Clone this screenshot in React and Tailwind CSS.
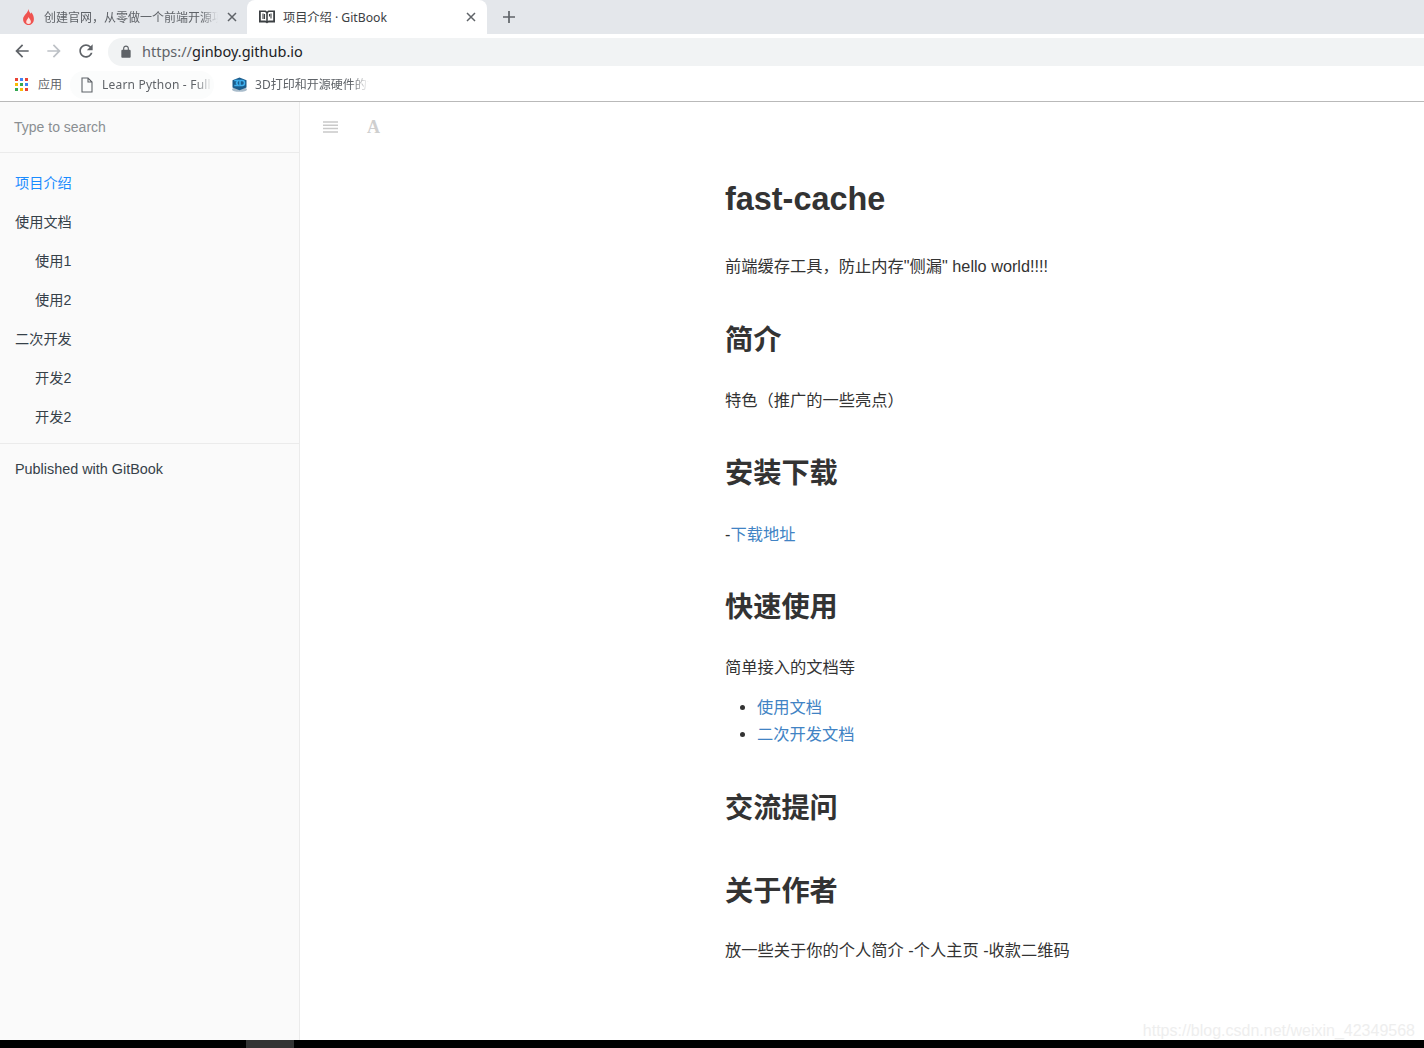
const ui = { fontFamily: '"Noto Sans", "Noto Sans CJK SC", sans-serif' };

const navItems = [
  { label: "项目介绍", active: true },
  { label: "使用文档" },
  { label: "使用1", sub: true },
  { label: "使用2", sub: true },
  { label: "二次开发" },
  { label: "开发2", sub: true },
  { label: "开发2", sub: true },
];

const CloseIcon = () => (
  <svg width="10" height="10" viewBox="0 0 10 10" className="shrink-0">
    <path d="M1 1l8 8M9 1l-8 8" stroke="#5f6368" strokeWidth="1.5" fill="none" />
  </svg>
);

const Fire = () => (
  <svg width="11" height="16" viewBox="0 0 11 16" className="shrink-0">
    <path d="M5.500 0c.2 2.400 1.300 3.400 2.300 4.700.3-.4.500-.9.500-1.500 1.500 1.800 2.600 4 2.600 6.700C10.900 13.400 8.600 16 5.500 16S.1 13.400.1 10.200C.1 6.400 4.700 4.500 5.500 0z" fill="#ef5350" />
    <path d="M5.600 8c.2 1.500 2.300 2.600 2.300 4.700 0 1.300-1 2.300-2.300 2.300-1.400 0-2.400-1-2.400-2.300C3.200 10.800 5.300 9.600 5.600 8z" fill="#fde3df" />
  </svg>
);

const BookIcon = () => (
  <svg width="16" height="14" viewBox="0 0 16 14" className="shrink-0">
    <path d="M0 .5h5.500C6.800.5 7.600 1 8 1.800 8.400 1 9.200.5 10.500.5H16V12.500h-5.500c-1.200 0-2 .3-2.500 1-.5-.7-1.300-1-2.500-1H0z" fill="#3c4043" />
    <path d="M1.800 2h3.600c.9 0 1.800.6 1.800 1.500V11c-.5-.3-1.100-.4-1.800-.4H1.800zM14.200 2h-3.600c-.9 0-1.800.6-1.800 1.500V11c.5-.3 1.100-.4 1.800-.4h3.600z" fill="#fff" />
    <path d="M4 3.500v5.500M5.500 4v5M10.500 4v2.500M12 3.500v5" stroke="#3c4043" strokeWidth="1.100" fill="none" />
  </svg>
);

// blue 3D badge with a soft shadow under it
const Bookmark3D = () => (
  <svg width="17" height="15" viewBox="0 0 17 15" className="shrink-0" aria-hidden="true">
    <ellipse cx="8.500" cy="12.500" rx="7.500" ry="2.300" fill="#a9bccb" />
    <path d="M8.500 0.500l7 2.800v7.200l-7 2.800-7-2.800V3.300z" fill="#1b5c8c" />
    <path d="M3.300 3.500h3.800L5.400 6l1.700 2.600H3.300M9 3.500h2.300c1.500 0 2.200 1.200 2.200 2.600s-.7 2.500-2.200 2.500H9z" fill="none" stroke="#3fb0ee" strokeWidth="1.500" />
  </svg>
);

const AppsGrid = () => {
  const colors = ["#ea4335", "#4285f4", "#ea4335", "#fbbc04", "#34a853", "#4285f4", "#34a853", "#fbbc04", "#ea4335"];
  return (
    <div className="grid grid-cols-3 gap-[2px] w-[13px] h-[13px] shrink-0">
      {colors.map((c, i) => (
        <span key={i} className="w-[3px] h-[3px]" style={{ backgroundColor: c }} />
      ))}
    </div>
  );
};

const TabStrip = () => (
  <div className="flex h-[34px] bg-[#e4e7eb] text-[12px] leading-none" style={ui}>
    <div className="flex items-center w-[247px] shrink-0 pl-[23px]">
      <Fire />
      <span className="ml-[10px] pt-[2px] w-[174px] overflow-hidden whitespace-nowrap text-[#5f6368] shrink-0 [mask-image:linear-gradient(to_right,black_90%,transparent)]">
        创建官网，从零做一个前端开源项目
      </span>
      <span className="ml-[9px]"><CloseIcon /></span>
    </div>
    <div className="flex items-center w-[240px] shrink-0 bg-white rounded-t-lg pl-[12px] pr-[11px]">
      <BookIcon />
      <span className="ml-[8px] pt-[2px] flex-1 text-[12.2px] text-[#3c4043] whitespace-nowrap">项目介绍 · GitBook</span>
      <CloseIcon />
    </div>
    <svg width="12" height="12" viewBox="0 0 12 12" className="ml-[16px] self-center">
      <path d="M6 0v12M0 6h12" stroke="#5f6368" strokeWidth="1.700" fill="none" />
    </svg>
  </div>
);

const AddressBar = () => (
  <div className="flex items-center h-[34px] bg-white">
    <svg width="20" height="20" viewBox="0 0 24 24" className="ml-[12px] shrink-0" fill="#5f6368">
      <path d="M20 11H7.830l5.590-5.590L12 4l-8 8 8 8 1.410-1.410L7.830 13H20v-2z" />
    </svg>
    <svg width="20" height="20" viewBox="0 0 24 24" className="ml-[12px] shrink-0" fill="#bdc1c6">
      <path d="M12 4l-1.410 1.410L16.170 11H4v2h12.170l-5.580 5.590L12 20l8-8z" />
    </svg>
    <svg width="20" height="20" viewBox="0 0 24 24" className="ml-[12px] shrink-0" fill="#5f6368">
      <path d="M17.650 6.350C16.200 4.900 14.210 4 12 4c-4.420 0-7.990 3.580-7.990 8s3.570 8 7.990 8c3.730 0 6.840-2.550 7.730-6h-2.080c-.82 2.330-3.040 4-5.650 4-3.310 0-6-2.690-6-6s2.690-6 6-6c1.660 0 3.140.69 4.220 1.780L13 11h7V4l-2.350 2.350z" />
    </svg>
    <div className="flex items-center flex-1 h-[28px] mt-[2px] ml-[12px] pl-[11px] bg-[#f1f3f4] rounded-l-full">
      <svg width="14" height="14" viewBox="0 0 24 24" fill="#5f6368" className="shrink-0">
        <path d="M18 8h-1V6c0-2.760-2.240-5-5-5S7 3.240 7 6v2H6c-1.100 0-2 .9-2 2v10c0 1.100.9 2 2 2h12c1.100 0 2-.9 2-2V10c0-1.100-.9-2-2-2zM9 6c0-1.660 1.340-3 3-3s3 1.340 3 3v2H9V6z" />
      </svg>
      <span className="ml-[9px] text-[14.5px] text-[#5f6368]" style={ui}>
        https://<span className="text-[#202124]">ginboy.github.io</span>
      </span>
    </div>
  </div>
);

const Bookmarks = () => (
  <div className="flex items-center h-[33px] bg-white border-b border-[#b9b9b9] box-content text-[12px] text-[#5f6368] whitespace-nowrap" style={ui}>
    <span className="ml-[15px]"><AppsGrid /></span>
    <span className="ml-[10px]">应用</span>
    <div className="flex items-center ml-[8px] w-[144px] h-[28px] pl-[10px] rounded-full bg-[#fbfcfc] overflow-hidden">
      <svg width="14" height="16" viewBox="0 0 14 16" className="shrink-0">
        <path d="M2 1h6l4 4V15H2zM8 1v4h4" fill="none" stroke="#5f6368" strokeWidth="1.100" />
      </svg>
      <span className="ml-[8px] w-[110px] overflow-hidden tracking-[0.2px] [mask-image:linear-gradient(to_right,black_85%,transparent)]">
        Learn Python - Full Course
      </span>
    </div>
    <span className="ml-[17px]"><Bookmark3D /></span>
    <span className="ml-[7px] w-[114px] overflow-hidden [mask-image:linear-gradient(to_right,black_85%,transparent)]">
      3D打印和开源硬件的世界
    </span>
  </div>
);

const Sidebar = () => (
  <aside className="w-[300px] shrink-0 bg-[#fafafa] border-r border-[#ebebeb] text-[14.2px] text-[#364149]">
    <div className="h-[51px] flex items-center pl-[14px] border-b border-[#ebebeb] text-[14px] text-[#8a8f92]">Type to search</div>
    <ul className="pt-[11px] pb-[6px] border-b border-[#ebebeb]">
      {navItems.map((item, i) => (
        <li
          key={i}
          className={`h-[39px] flex items-center ${item.sub ? "pl-[35px]" : "pl-[15px]"} ${item.active ? "text-[#1a8cff]" : ""}`}
        >
          {item.label}
        </li>
      ))}
    </ul>
    <div className="h-[50px] pt-[2px] flex items-center pl-[15px] text-[14.4px]">Published with GitBook</div>
  </aside>
);

const Toolbar = () => (
  <div className="flex items-center h-[50px] pl-[23px] gap-[29px]">
    <svg width="15" height="12" viewBox="0 0 15 12">
      <path d="M0 1h15M0 4.300h15M0 7.600h15M0 10.900h15" stroke="#c9c9c9" strokeWidth="1.500" fill="none" />
    </svg>
    <span className="font-bold text-[18px] text-[#cfcfcf] leading-none" style={{ fontFamily: '"Liberation Serif", serif' }}>A</span>
  </div>
);

const Content = () => (
  <article className="w-[700px] ml-[425px] pt-[23px] text-[16.25px] leading-[27.2px] text-[#333]">
    <h1 className="text-[32.4px] font-bold leading-[48px] mb-[30px]">fast-cache</h1>
    <p>前端缓存工具，防止内存"侧漏" hello world!!!!</p>
    <h2 className="text-[28.2px] font-bold leading-[47.6px] mt-[36.7px] mb-[22.8px]">简介</h2>
    <p>特色（推广的一些亮点）</p>
    <h2 className="text-[28.2px] font-bold leading-[47.6px] mt-[35.7px] mb-[22.8px]">安装下载</h2>
    <p>-<a className="text-[#4183c4]">下载地址</a></p>
    <h2 className="text-[28.2px] font-bold leading-[47.6px] mt-[36.7px] mb-[21.8px]">快速使用</h2>
    <p className="mb-[12.6px]">简单接入的文档等</p>
    <ul className="list-disc pl-[32px]">
      <li><a className="text-[#4183c4]">使用文档</a></li>
      <li><a className="text-[#4183c4]">二次开发文档</a></li>
    </ul>
    <h2 className="text-[28.2px] font-bold leading-[47.6px] mt-[36.7px] mb-[23.8px]">交流提问</h2>
    <h2 className="text-[28.2px] font-bold leading-[47.6px] mt-[35.7px] mb-[21.8px]">关于作者</h2>
    <p>放一些关于你的个人简介 -个人主页 -收款二维码</p>
  </article>
);

export default function App() {
  return (
    <div className="relative h-[1048px] w-[1424px] overflow-hidden flex flex-col bg-white" style={{ fontFamily: '"Liberation Sans", "Noto Sans CJK SC", sans-serif' }}>
      <TabStrip />
      <AddressBar />
      <Bookmarks />
      <div className="flex flex-1 min-h-0">
        <Sidebar />
        <main className="flex-1 min-w-0">
          <Toolbar />
          <Content />
        </main>
      </div>
      <div className="h-[8px] bg-black shrink-0 pl-[246px]">
        <div className="w-[48px] h-full bg-[#333]" />
      </div>
      <span className="absolute right-[9px] bottom-[9px] text-[16px] leading-none text-[#eeeeee]">
        https://blog.csdn.net/weixin_42349568
      </span>
    </div>
  );
}
